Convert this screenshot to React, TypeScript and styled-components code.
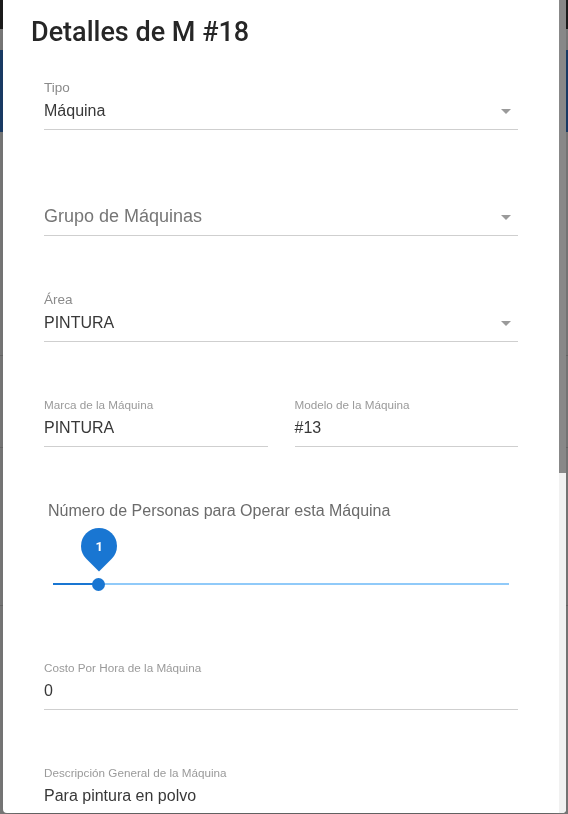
import React from 'react';
import styled, { createGlobalStyle } from 'styled-components';

const GlobalStyle = createGlobalStyle`
  html, body {
    margin: 0;
    padding: 0;
    height: 100%;
    overflow: hidden;
  }
  body {
    background: #808080;
    font-family: 'Liberation Sans', Arial, sans-serif;
  }
`;

// página de fondo, oscurecida por el backdrop del diálogo
const Backdrop = styled.div`
  display: flex;
  flex-direction: column;
  height: 814px;
  background: #808080;
`;

const AppBar = styled.div`
  height: 29px;
  background: #1c1c1c;
`;

const Banner = styled.div`
  margin-top: 21px;
  height: 82px;
  background: #1b406e;
`;

const Rule = styled.div<{ $mt: number }>`
  margin-top: ${p => p.$mt}px;
  height: 1px;
  background: #6f6f6f;
`;

const Overlay = styled.div`
  position: fixed;
  inset: 0;
  display: flex;
  align-items: flex-start;
  padding-left: 3px;
`;

const Paper = styled.div`
  display: flex;
  width: 563px;
  height: 813px;
  background: #fff;
  border-radius: 0 0 4px 4px;
  overflow: hidden;
  box-shadow: 0 11px 15px -7px rgba(0, 0, 0, 0.2), 0 24px 38px 3px rgba(0, 0, 0, 0.14);
`;

const Content = styled.div`
  flex: 1;
  min-width: 0;
  overflow: hidden;
`;

// barra de desplazamiento del diálogo
const ScrollTrack = styled.div`
  width: 7px;
  flex-shrink: 0;
  background: #f1f1f1;
`;

const ScrollThumb = styled.div`
  background: #888;
`;

const Title = styled.h2`
  margin: 0;
  padding: 16px 28px 0;
  font-family: Roboto, 'Liberation Sans', sans-serif;
  font-weight: 500;
  font-size: 27px;
  line-height: 32px;
  color: #262626;
`;

const Form = styled.div`
  display: flex;
  flex-direction: column;
  padding: 32px 41px 0;
`;

const FieldBox = styled.div<{ $mt: number }>`
  display: flex;
  flex-direction: column;
  flex: 1;
  margin-top: ${p => p.$mt}px;
  min-width: 0;
`;

const Label = styled.div<{ $select?: boolean }>`
  height: 16px;
  font-size: ${p => (p.$select ? '13.5px' : '11.7px')};
  line-height: 16px;
  color: ${p => (p.$select ? '#8a8a8a' : '#9a9a9a')};
`;

const ValueRow = styled.div`
  display: flex;
  align-items: center;
  justify-content: space-between;
  margin-top: 5px;
  padding-bottom: 9px;
  border-bottom: 1px solid #cfcfcf;
`;

const Value = styled.span<{ $placeholder?: boolean }>`
  height: 19px;
  font-size: ${p => (p.$placeholder ? '18px' : '16px')};
  line-height: 19px;
  color: ${p => (p.$placeholder ? '#767676' : '#383838')};
  white-space: nowrap;
`;

const Arrow = styled.svg`
  width: 24px;
  height: 24px;
  margin: -2.5px 0;
  fill: #9a9a9a;
  flex-shrink: 0;
`;

const Row = styled.div<{ $mt: number }>`
  display: flex;
  gap: 27px;
  margin-top: ${p => p.$mt}px;
`;

const SliderBlock = styled.div`
  margin-top: 54px;
`;

const SliderLabel = styled.div`
  padding-left: 4px;
  font-size: 16px;
  line-height: 19px;
  color: #6b6b6b;
`;

const SliderRoot = styled.div`
  position: relative;
  margin: 57px 9px 0;
  height: 14px;
`;

const Rail = styled.div`
  position: absolute;
  left: 0;
  right: 0;
  top: 6px;
  height: 2px;
  background: #90caf9;
`;

const Track = styled.div`
  position: absolute;
  left: 0;
  top: 6px;
  height: 2px;
  background: #1976d2;
`;

const Thumb = styled.div`
  position: absolute;
  top: 0.5px;
  width: 13px;
  height: 13px;
  margin-left: -6.5px;
  border-radius: 50%;
  background: #1976d2;
`;

const Balloon = styled.span`
  position: absolute;
  left: -11.5px;
  top: -49.5px;
  width: 36px;
  height: 36px;
  display: flex;
  align-items: center;
  justify-content: center;
  border-radius: 50% 50% 50% 0;
  background: #1976d2;
  transform: rotate(-45deg);
`;

const BalloonText = styled.span`
  transform: rotate(45deg);
  font-family: Roboto, 'Liberation Sans', sans-serif;
  font-weight: 700;
  font-size: 13px;
  color: #fff;
`;

type FieldProps = {
  label?: string;
  value?: string;
  placeholder?: string;
  select?: boolean;
  mt?: number;
};

const Field: React.FC<FieldProps> = ({ label, value, placeholder, select, mt = 0 }) => (
  <FieldBox $mt={mt}>
    <Label $select={select}>{label}</Label>
    <ValueRow>
      <Value $placeholder={!!placeholder}>{value ?? placeholder}</Value>
      {select && (
        <Arrow viewBox="0 0 24 24">
          <path d="M7 10l5 5 5-5z" />
        </Arrow>
      )}
    </ValueRow>
  </FieldBox>
);

const personas = { min: 0, max: 10, value: 1 };
// fracción visible del contenido del diálogo
const visibleRatio = 473 / 813;

const App: React.FC = () => {
  const pct = ((personas.value - personas.min) / (personas.max - personas.min)) * 100;

  return (
    <>
      <GlobalStyle />
      <Backdrop>
        <AppBar />
        <Banner />
        <Rule $mt={223} />
        <Rule $mt={91} />
        <Rule $mt={157} />
      </Backdrop>
      <Overlay>
        <Paper>
          <Content>
            <Title>Detalles de M #18</Title>
            <Form>
              <Field select label="Tipo" value="Máquina" />
              <Field select placeholder="Grupo de Máquinas" mt={56} />
              <Field select label="Área" value="PINTURA" mt={56} />
              <Row $mt={55}>
                <Field label="Marca de la Máquina" value="PINTURA" />
                <Field label="Modelo de la Máquina" value="#13" />
              </Row>
              <SliderBlock>
                <SliderLabel>Número de Personas para Operar esta Máquina</SliderLabel>
                <SliderRoot>
                  <Rail />
                  <Track style={{ width: `${pct}%` }} />
                  <Thumb style={{ left: `${pct}%` }}>
                    <Balloon>
                      <BalloonText>{personas.value}</BalloonText>
                    </Balloon>
                  </Thumb>
                </SliderRoot>
              </SliderBlock>
              <Field label="Costo Por Hora de la Máquina" value="0" mt={69} />
              <Field label="Descripción General de la Máquina" value="Para pintura en polvo" mt={55} />
            </Form>
          </Content>
          <ScrollTrack>
            <ScrollThumb style={{ height: `${visibleRatio * 100}%` }} />
          </ScrollTrack>
        </Paper>
      </Overlay>
    </>
  );
};

export default App;
